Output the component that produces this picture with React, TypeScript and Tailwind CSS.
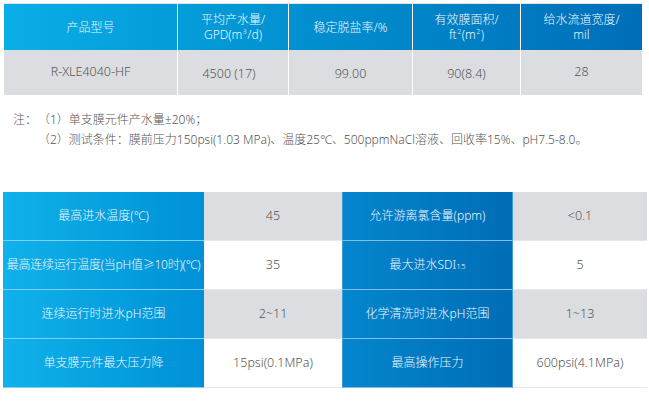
import React from "react";

const headCell =
  "flex items-center justify-center text-center leading-[15px] text-[12px] font-light text-[#eef7fc]";
const dataCell =
  "flex items-center justify-center text-center text-[12.5px] font-light text-[#555]";

const Sup = ({ c }: { c: string }) => (
  <span className="text-[7px] leading-[7px] align-super mx-[0.5px]">{c}</span>
);

const rows: { a: React.ReactNode; b: string; c: React.ReactNode; d: string }[] = [
  { a: "最高进水温度(℃)", b: "45", c: "允许游离氯含量(ppm)", d: "<0.1" },
  { a: (<span className="tracking-[-0.25px]">最高连续运行温度(当pH值≥10时)(℃)</span>), b: "35", c: (<span>最大进水SDI<span className="text-[8px]">15</span></span>), d: "5" },
  { a: "连续运行时进水pH范围", b: "2~11", c: "化学清洗时进水pH范围", d: "1~13" },
  { a: "单支膜元件最大压力降", b: "15psi(0.1MPa)", c: "最高操作压力", d: "600psi(4.1MPa)" },
];

export default function App() {
  return (
    <div className="w-[649px] h-[412px] bg-white overflow-hidden font-['Noto_Sans','Noto_Sans_CJK_SC',sans-serif]">
      {/* Top table */}
      <div className="pt-[3px] pl-[4px]">
        <div className="w-[638px] border-t border-[#e3e5e7]">
          <div className="grid grid-cols-[173px_111px_124px_108px_122px] h-[46px] bg-gradient-to-r from-[#0aaee6] to-[#006eb8]">
            <div className={headCell}>产品型号</div>
            <div className={headCell + " border-l border-white"}>
              <div>
                <div>平均产水量/</div>
                <div>GPD(m<Sup c="3" />/d)</div>
              </div>
            </div>
            <div className={headCell + " border-l border-white"}>稳定脱盐率/%</div>
            <div className={headCell + " border-l border-white"}>
              <div>
                <div>有效膜面积/</div>
                <div>ft<Sup c="2" />(m<Sup c="2" />)</div>
              </div>
            </div>
            <div className={headCell + " border-l border-white"}>
              <div>
                <div>给水流道宽度/</div>
                <div>mil</div>
              </div>
            </div>
          </div>
          <div className="grid grid-cols-[173px_111px_124px_108px_122px] h-[45px] bg-[#dcdde0]">
            <div className={dataCell}>R-XLE4040-HF</div>
            <div className={dataCell + " border-l border-white pt-[3px] pr-[8px]"}>4500 (17)</div>
            <div className={dataCell + " border-l border-white pt-[3px]"}>99.00</div>
            <div className={dataCell + " border-l border-white pt-[3px]"}>90(8.4)</div>
            <div className={dataCell + " border-l border-white"}>28</div>
          </div>
        </div>
      </div>

      {/* Notes */}
      <div className="mt-[15px] pl-[13px] flex text-[12px] font-light leading-[20px] text-[#555]">
        <div className="w-[25px] shrink-0">注：</div>
        <div>
          <div>（1）单支膜元件产水量±20%；</div>
          <div>（2）测试条件：膜前压力150psi(1.03 MPa)、温度25℃、500ppmNaCl溶液、回收率15%、pH7.5-8.0。</div>
        </div>
      </div>

      {/* Bottom table */}
      <div className="mt-[42px] pl-[3px]">
        <div className="w-[644px]">
          {rows.map((r, i) => {
            const gray = i % 2 === 0;
            return (
              <div
                key={i}
                className="grid grid-cols-[201px_138px_171px_134px] h-[49px]"
              >
                <div className="flex items-center justify-center text-center whitespace-nowrap text-[12px] font-light text-[#eef7fc] bg-gradient-to-r from-[#10b2ea] to-[#0090d6] border-b border-[#7fd0f2]">
                  {r.a}
                </div>
                <div
                  className={
                    "flex items-center justify-center text-center text-[12.5px] font-light text-[#555] border-b border-[#e6e7e9] " +
                    (gray ? "bg-[#dcdde0]" : "bg-white")
                  }
                >
                  {r.b}
                </div>
                <div className="flex items-center justify-center text-center whitespace-nowrap text-[12px] font-light text-[#eef7fc] bg-gradient-to-r from-[#0386ce] to-[#006db6] border-b border-x border-b-[#7fbfe8] border-x-[#3f9ed8]">
                  {r.c}
                </div>
                <div
                  className={
                    "flex items-center justify-center text-center text-[12.5px] font-light text-[#555] border-b border-[#e6e7e9] " +
                    (gray ? "bg-[#dcdde0]" : "bg-white")
                  }
                >
                  {r.d}
                </div>
              </div>
            );
          })}
        </div>
      </div>
    </div>
  );
}
